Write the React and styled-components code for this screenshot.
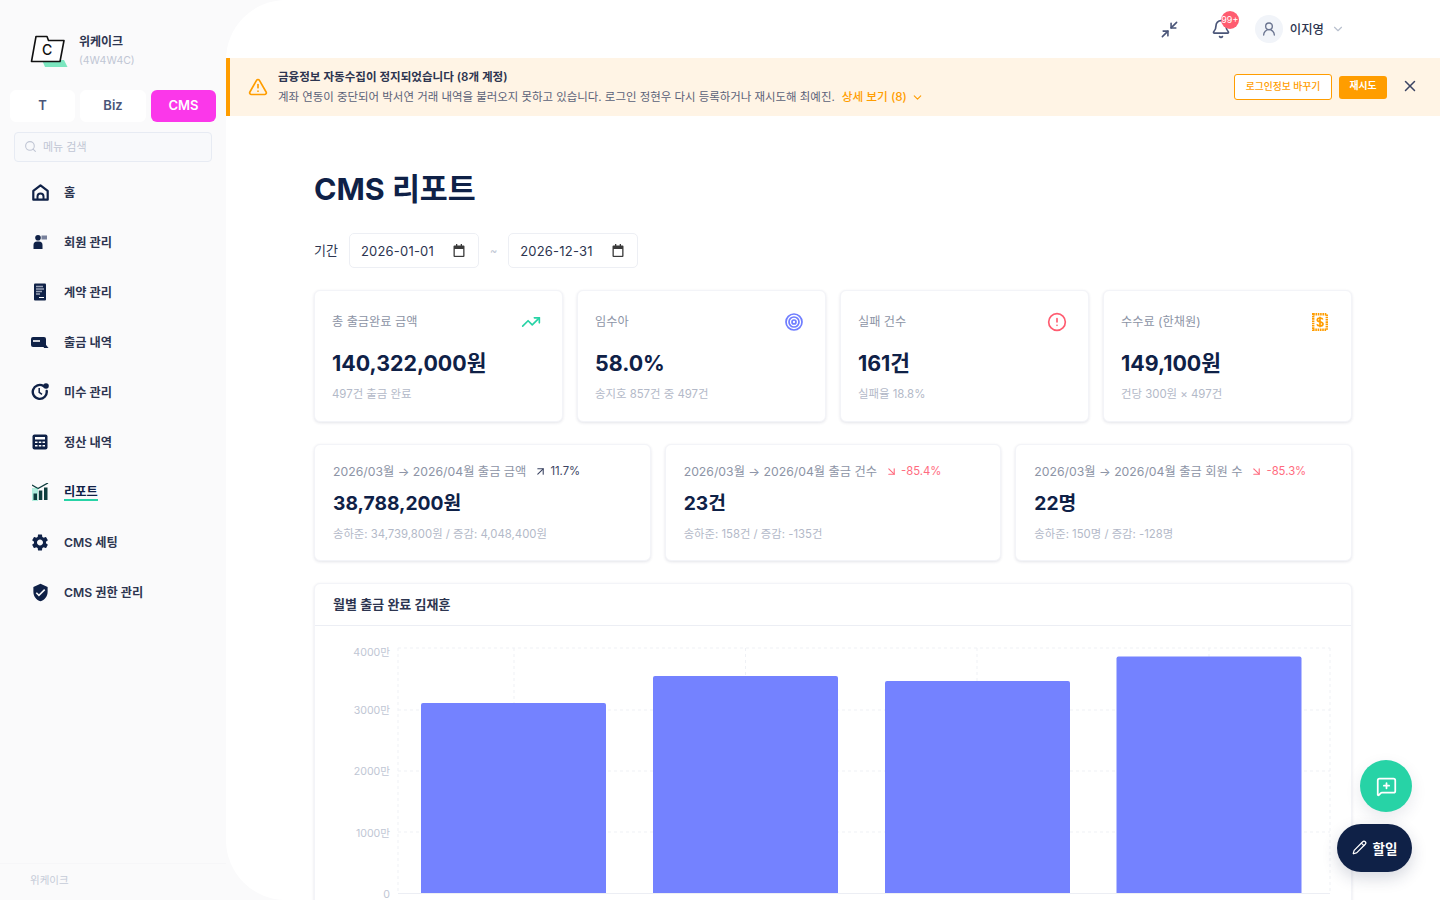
import styled, { createGlobalStyle } from "styled-components";
import {
  ArrowDownRight,
  ArrowUpRight,
  Bell,
  ChevronDown,
  CircleAlert,
  MessageSquarePlus,
  Minimize2,
  Pencil,
  Search,
  TrendingUp,
  TriangleAlert,
  UserRound,
  X,
} from "lucide-react";
import { MdSettings, MdVerifiedUser } from "react-icons/md";

const NAVY = "#0f2147";
const FONT = `Inter, "Noto Sans CJK KR", "Noto Sans", sans-serif`;

const GlobalStyle = createGlobalStyle`
  html, body, #root {
    margin: 0;
    height: 100%;
  }
  body {
    font-family: ${FONT};
    background: #fafafb;
    color: ${NAVY};
    overflow: hidden;
  }
  * {
    box-sizing: border-box;
  }
`;

const Shell = styled.div`
  display: flex;
  width: 1440px;
  height: 900px;
  overflow: hidden;
  position: relative;
`;

const Sidebar = styled.aside`
  width: 226px;
  flex: none;
  display: flex;
  flex-direction: column;
  background: #fafafb;
`;

const Brand = styled.div`
  display: flex;
  align-items: center;
  gap: 11px;
  height: 90px;
  padding: 11px 0 0 30px;
`;

const BrandText = styled.div`
  display: flex;
  flex-direction: column;
  gap: 3px;
`;

const BrandName = styled.span`
  font-size: 12px;
  line-height: 16px;
  font-weight: 600;
  color: #2d3550;
`;

const BrandCode = styled.span`
  font-size: 10.5px;
  line-height: 15px;
  color: #c0c6d4;
`;

const Tabs = styled.div`
  display: grid;
  grid-template-columns: 65px 66px 65px;
  gap: 5px;
  padding-left: 10px;
`;

const Tab = styled.button`
  height: 32px;
  padding: 0 0 2px;
  border: 0;
  border-radius: 6px;
  font-family: ${FONT};
  font-size: 13px;
  font-weight: 600;
  color: ${(p) => (p.$active ? "#fff" : "#4a5578")};
  background: ${(p) => (p.$active ? "#fb37ea" : "#fff")};
`;

const SearchBox = styled.div`
  display: flex;
  align-items: center;
  gap: 6px;
  width: 198px;
  height: 30px;
  margin: 10px 0 0 14px;
  padding: 0 0 2px 9px;
  border: 1px solid #e7ebf3;
  border-radius: 4px;
  background: #f8f9fb;
  color: #c0c6d4;
  font-size: 11px;
`;

const Nav = styled.nav`
  display: flex;
  flex-direction: column;
  margin-top: 5px;
`;

const NavItem = styled.a`
  display: flex;
  align-items: center;
  height: 50px;
  padding-left: 30px;
  font-size: 12.2px;
  font-weight: 600;
  color: #2d3550;
`;

const NavIcon = styled.span`
  display: inline-flex;
  align-items: center;
  justify-content: center;
  width: 20px;
  height: 20px;
  margin-right: 14px;
  color: ${NAVY};
`;

const NavLabel = styled.span`
  line-height: 15px;
  color: ${(p) => (p.$active ? NAVY : "inherit")};
  border-bottom: ${(p) => (p.$active ? "2px solid #27d3a6" : "0")};
`;

const SideFooter = styled.div`
  margin-top: auto;
  height: 37px;
  padding: 8px 0 0 30px;
  border-top: 1px solid #f6f6f8;
  font-size: 10.5px;
  color: #c5cbd8;
`;

const Main = styled.main`
  flex: 1;
  min-width: 0;
  height: 900px;
  display: flex;
  flex-direction: column;
  overflow: hidden;
  background: #fff;
  border-radius: 60px 0 0 60px;
`;

const TopBar = styled.header`
  height: 58px;
  flex: none;
  display: flex;
  align-items: center;
  justify-content: flex-end;
  padding-right: 95px;
  color: #4a5578;
`;

const BellWrap = styled.span`
  position: relative;
  display: inline-flex;
  margin: 0 24px 0 32px;
`;

const Badge = styled.span`
  position: absolute;
  top: -8px;
  left: 10px;
  width: 18px;
  height: 18px;
  border-radius: 50%;
  background: #ff5c70;
  color: #fff;
  font-size: 9px;
  line-height: 18px;
  text-align: center;
`;

const Avatar = styled.span`
  display: inline-flex;
  align-items: center;
  justify-content: center;
  width: 28px;
  height: 28px;
  border-radius: 50%;
  background: #f1f4f9;
  color: #69738f;
`;

const UserName = styled.span`
  margin: 0 7px;
  font-size: 12.4px;
  font-weight: 500;
  color: #2d3550;
`;

const Banner = styled.div`
  height: 58px;
  flex: none;
  display: flex;
  align-items: center;
  padding: 0 20px 0 18px;
  border-left: 4px solid #ff9d00;
  background: #fff4e5;
`;

const BannerBody = styled.div`
  flex: 1;
  margin-left: 10px;
`;

const BannerTitle = styled.div`
  font-size: 11.55px;
  line-height: 21px;
  font-weight: 600;
  color: #2d3550;
`;

const BannerText = styled.div`
  font-size: 11.45px;
  line-height: 19px;
  color: #5a6178;
`;

const BannerLink = styled.span`
  display: inline-flex;
  align-items: center;
  gap: 4px;
  margin-left: 7px;
  color: #ff9d00;
  font-size: 11.7px;
  font-weight: 500;
`;

const OutlineButton = styled.button`
  width: 98px;
  height: 26px;
  padding: 0 0 2px;
  border: 1px solid #ff9d00;
  border-radius: 3px;
  background: #fff;
  color: #ff9d00;
  font-family: ${FONT};
  font-size: 9.8px;
  font-weight: 500;
`;

const SolidButton = styled.button`
  width: 48px;
  height: 23px;
  margin-left: 7px;
  padding: 0 0 4px;
  border: 0;
  border-radius: 3px;
  background: #ff9d00;
  color: #fff;
  font-family: ${FONT};
  font-size: 9.8px;
  font-weight: 700;
`;

const CloseButton = styled.span`
  display: inline-flex;
  margin: 0 1px 2px 14px;
  color: #3b4463;
`;

const Content = styled.div`
  padding: 0 88px;
`;

const Title = styled.h1`
  margin: 53px 0 0;
  font-size: 30.4px;
  line-height: 40px;
  font-weight: 700;
  color: ${NAVY};
`;

const Period = styled.div`
  display: flex;
  align-items: center;
  height: 35px;
  margin-top: 24px;
  font-size: 13px;
  color: #2d3550;
`;

const PeriodLabel = styled.span`
  margin-bottom: 2px;
`;

const DateField = styled.div`
  display: flex;
  align-items: center;
  justify-content: space-between;
  width: 130px;
  height: 35px;
  margin-left: 11px;
  padding: 0 13px 0 11px;
  border: 1px solid #edeff4;
  border-radius: 5px;
  background: #fff;
  color: #2d3550;
  font-size: 13px;
  letter-spacing: 0.2px;
`;

const Tilde = styled.span`
  margin: 0 0 0 11px;
  color: #c0c6d4;
  font-size: 11px;
`;

const StatGrid = styled.div`
  display: grid;
  grid-template-columns: repeat(4, 1fr);
  gap: 14px;
  margin-top: 22px;
`;

const Card = styled.section`
  background: #fff;
  border: 1px solid #f3f4f8;
  border-radius: 6px;
  box-shadow: 0 1px 3px rgba(30, 40, 80, 0.12);
`;

const StatCard = styled(Card)`
  height: 132px;
  padding: 20px 18px 0 17px;
`;

const StatHead = styled.div`
  display: flex;
  align-items: center;
  justify-content: space-between;
  height: 20px;
  font-size: 12.2px;
  color: #8d94a6;
`;

const IconSlot = styled.span`
  display: inline-flex;
  margin: 2px ${(p) => p.$gap}px 0 0;
  color: ${(p) => p.$color};
`;

const StatValue = styled.div`
  margin-top: 19px;
  font-size: 21.4px;
  line-height: 26px;
  font-weight: 700;
  color: ${NAVY};
`;

const StatNote = styled.div`
  margin-top: 10px;
  font-size: 11.4px;
  line-height: 16px;
  color: #b3b9c8;
`;

const CompareGrid = styled.div`
  display: grid;
  grid-template-columns: repeat(3, 1fr);
  gap: 14px;
  margin-top: 22px;
`;

const CompareCard = styled(Card)`
  height: 117px;
  padding: 17px 18px 0;
`;

const CompareHead = styled.div`
  display: flex;
  align-items: center;
  height: 18px;
  font-size: 12.25px;
  color: #8d94a6;
  white-space: nowrap;
`;

const Delta = styled.span`
  display: inline-flex;
  align-items: center;
  gap: 3px;
  margin-left: 8px;
  font-size: 11.3px;
  color: ${(p) => (p.$down ? "#ff6b7e" : "#3b4463")};
`;

const CompareValue = styled.div`
  margin-top: 10px;
  font-size: 19.25px;
  line-height: 26px;
  font-weight: 700;
  color: ${NAVY};
`;

const CompareNote = styled.div`
  margin-top: 10px;
  font-size: 11.35px;
  line-height: 16px;
  color: #b3b9c8;
`;

const ChartCard = styled(Card)`
  margin-top: 22px;
  height: 400px;
`;

const ChartHead = styled.div`
  height: 42px;
  padding: 0 18px 2px;
  display: flex;
  align-items: center;
  border-bottom: 1px solid #eceef4;
  font-size: 13px;
  font-weight: 600;
  color: #2d3550;
`;

const ChartSvg = styled.svg`
  display: block;
`;

const AxisLabel = styled.text`
  font-family: ${FONT};
  font-size: 10.6px;
  fill: #c0c6d4;
  text-anchor: end;
`;

const Fab = styled.button`
  position: absolute;
  right: 28px;
  bottom: 88px;
  width: 52px;
  height: 52px;
  display: flex;
  align-items: center;
  justify-content: center;
  padding: 0;
  border: 0;
  border-radius: 50%;
  background: #27d3a6;
  color: #fff;
  box-shadow: 0 6px 16px rgba(30, 40, 80, 0.1);
`;

const TodoButton = styled.button`
  position: absolute;
  right: 28px;
  bottom: 28px;
  width: 75px;
  height: 48px;
  display: flex;
  align-items: center;
  justify-content: center;
  gap: 6px;
  padding: 0 0 1px;
  border: 0;
  border-radius: 24px;
  background: ${NAVY};
  color: #fff;
  font-family: ${FONT};
  font-size: 13.5px;
  font-weight: 700;
  box-shadow: 0 6px 16px rgba(30, 40, 80, 0.18);
`;

const LogoMark = () => (
  <svg width="38" height="34" viewBox="0 0 38 34" aria-hidden="true">
    <path d="M12 26h22l3.5 7H15z" fill="#7be6bf" />
    <path
      d="M6 2.5h11l1.5 4h15.5L30 27.5H1.5z"
      fill="#fff"
      stroke="#111"
      strokeWidth="1.6"
      strokeLinejoin="round"
    />
    <text x="12" y="21" fontFamily="Inter, sans-serif" fontSize="14" fontWeight="500" fill="#111">
      C
    </text>
  </svg>
);

const CalendarGlyph = () => (
  <svg width="12" height="13" viewBox="0 0 12 13" aria-hidden="true">
    <path
      d="M1.500 1.500h9a1 1 0 0 1 1 1v9.500a1 1 0 0 1-1 1h-9a1 1 0 0 1-1-1V2.500a1 1 0 0 1 1-1z"
      fill="#3a3a3a"
    />
    <path d="M1.800 5h8.400v6.800H1.800z" fill="#fff" />
    <path d="M3 0h1.300v2H3zM7.700 0H9v2H7.700z" fill="#3a3a3a" />
  </svg>
);

const HomeIcon = () => (
  <svg width="17" height="17" viewBox="0 0 17 17" fill="none" stroke="currentColor" aria-hidden="true">
    <path d="M1.300 15.700V6.800L8.500 1.300l7.200 5.500v8.900h-14.400z" strokeWidth="2.200" strokeLinejoin="round" />
    <path d="M5.500 15.500v-3a3 3 0 0 1 6 0v3" strokeWidth="2" />
  </svg>
);

const MemberIcon = () => (
  <svg width="16" height="16" viewBox="0 0 16 16" fill="currentColor" aria-hidden="true">
    <circle cx="6" cy="3.800" r="2.800" />
    <path d="M1.500 15V11a3.500 3.500 0 0 1 3.500-3.500h2A3.500 3.500 0 0 1 10.500 11v4z" />
    <path d="M9.500 1.500h5.500v4H9.500z" fill="#77809b" />
  </svg>
);

const ContractIcon = () => (
  <svg width="14" height="18" viewBox="0 0 14 18" aria-hidden="true">
    <rect width="12" height="17" x="1" y="0.500" rx="1" fill="currentColor" />
    <path d="M3 3.500h7M3 6h8M3 8.500h6M3 11h4" stroke="#9aa3b8" strokeWidth="1.300" />
    <path d="M6 14.500h5" stroke="#fff" strokeWidth="1" />
  </svg>
);

const PayoutIcon = () => (
  <svg width="18" height="13" viewBox="0 0 18 13" aria-hidden="true">
    <rect width="15" height="10" y="1" rx="2" fill="currentColor" />
    <path d="M2 5h7" stroke="#fff" strokeWidth="1.600" />
    <path d="M11 7h2.500l4 5h-4.500z" fill="currentColor" />
  </svg>
);

const UnpaidIcon = () => (
  <svg width="18" height="18" viewBox="0 0 18 18" fill="none" aria-hidden="true">
    <path
      d="M12.500 3a7 7 0 1 0 3.200 5"
      stroke="currentColor"
      strokeWidth="2.400"
      strokeLinecap="round"
    />
    <path d="M8.200 5v4.300l2.800 2" stroke="currentColor" strokeWidth="1.500" />
    <circle cx="15" cy="3" r="2.800" fill="currentColor" />
  </svg>
);

const CalculatorIcon = () => (
  <svg width="16" height="16" viewBox="0 0 16 16" aria-hidden="true">
    <rect width="15" height="15" x="0.500" y="0.500" rx="2" fill="currentColor" />
    <path d="M3 3h10v2.500H3z" fill="#fff" />
    <path d="M3 7.500h2.500V9H3zM6.800 7.500h2.500V9H6.800zM10.500 7.500H13V9h-2.500zM3 11h2.500v1.500H3zM6.800 11h2.500v1.500H6.800zM10.500 11H13v1.500h-2.500z" fill="#fff" />
  </svg>
);

const ReportIcon = () => (
  <svg width="17" height="18" viewBox="0 0 17 18" aria-hidden="true">
    <path d="M0 2l6 3.500L16 0" fill="none" stroke="#0f3d3e" strokeWidth="1.400" />
    <path d="M0 5h6v13H0z" fill="#27d3a6" opacity="0.35" />
    <path d="M1.500 10.500h3.500V17H1.500zM6.800 7.500h3.500V17H6.800zM12 4.500h3.500V17H12z" fill="#0f3d3e" />
  </svg>
);

const TargetIcon = () => (
  <svg width="18" height="18" viewBox="0 0 18 18" fill="none" stroke="currentColor" aria-hidden="true">
    <circle cx="9" cy="9" r="8" strokeWidth="1.700" />
    <circle cx="9" cy="9" r="5" strokeWidth="1.700" />
    <circle cx="9" cy="9" r="2" strokeWidth="1.700" />
  </svg>
);

const StampIcon = () => (
  <svg width="16" height="18" viewBox="0 0 16 18" fill="none" stroke="currentColor" aria-hidden="true">
    <rect x="1.200" y="1.200" width="13.600" height="15.600" strokeWidth="2.400" strokeDasharray="1.600 0.700" />
    <path
      d="M10.800 6.500C10.500 5.500 9.500 5 8 5 6.300 5 5.300 5.800 5.300 7 5.300 9.500 11 8.300 11 11 11 12.300 9.800 13 8 13 6.300 13 5.300 12.300 5 11.300M8 3.800v10.400"
      strokeWidth="1.700"
    />
  </svg>
);

const navItems = [
  { label: "홈", icon: <HomeIcon /> },
  { label: "회원 관리", icon: <MemberIcon /> },
  { label: "계약 관리", icon: <ContractIcon /> },
  { label: "출금 내역", icon: <PayoutIcon /> },
  { label: "미수 관리", icon: <UnpaidIcon /> },
  { label: "정산 내역", icon: <CalculatorIcon /> },
  { label: "리포트", icon: <ReportIcon />, active: true },
  { label: "CMS 세팅", icon: <MdSettings size={21} /> },
  { label: "CMS 권한 관리", icon: <MdVerifiedUser size={19} /> },
];

const stats = [
  {
    label: "총 출금완료 금액",
    value: "140,322,000원",
    note: "497건 출금 완료",
    color: "#27d3a6",
    gap: 3,
    icon: <TrendingUp size={20} />,
  },
  {
    label: "임수아",
    value: "58.0%",
    note: "송지호 857건 중 497건",
    color: "#6f7dff",
    gap: 4,
    icon: <TargetIcon />,
  },
  {
    label: "실패 건수",
    value: "161건",
    note: "실패율 18.8%",
    color: "#ff5c70",
    gap: 3,
    icon: <CircleAlert size={20} />,
  },
  {
    label: "수수료 (한채원)",
    value: "149,100원",
    note: "건당 300원 × 497건",
    color: "#ff9d00",
    gap: 5,
    icon: <StampIcon />,
  },
];

const compares = [
  {
    label: "2026/03월 → 2026/04월 출금 금액",
    delta: "11.7%",
    value: "38,788,200원",
    note: "송하준: 34,739,800원 / 증감: 4,048,400원",
  },
  {
    label: "2026/03월 → 2026/04월 출금 건수",
    delta: "-85.4%",
    down: true,
    value: "23건",
    note: "송하준: 158건 / 증감: -135건",
  },
  {
    label: "2026/03월 → 2026/04월 출금 회원 수",
    delta: "-85.3%",
    down: true,
    value: "22명",
    note: "송하준: 150명 / 증감: -128명",
  },
];

const ticks = [
  { label: "4000만", y: 22, textY: 30 },
  { label: "3000만", y: 84, textY: 88 },
  { label: "2000만", y: 145, textY: 149 },
  { label: "1000만", y: 206, textY: 211 },
  { label: "0", y: 267, textY: 272 },
];

const bars = [
  { x: 106, top: 77 },
  { x: 338, top: 50 },
  { x: 570, top: 55 },
  { x: 801.500, top: 30.500 },
];

const MonthlyChart = () => (
  <ChartSvg width="1036" height="356" viewBox="0 0 1036 356" aria-hidden="true">
    {ticks.slice(0, 4).map((t) => (
      <line key={t.label} x1="83" x2="1015" y1={t.y} y2={t.y} stroke="#eff1f5" strokeDasharray="3 3" />
    ))}
    {[83, 199, 430.500, 662, 894, 1015].map((x) => (
      <line key={x} x1={x} x2={x} y1="22" y2="267" stroke="#eff1f5" strokeDasharray="3 3" />
    ))}
    {bars.map((b) => (
      <path
        key={b.x}
        d={`M${b.x} 267V${b.top + 2}a2 2 0 0 1 2-2h181a2 2 0 0 1 2 2V267z`}
        fill="#7482ff"
      />
    ))}
    <line x1="83" x2="1015" y1="267.500" y2="267.500" stroke="#eceef4" />
    {ticks.map((t) => (
      <AxisLabel key={t.label} x="75" y={t.textY}>
        {t.label}
      </AxisLabel>
    ))}
  </ChartSvg>
);

export default function App() {
  return (
    <>
      <GlobalStyle />
      <Shell>
        <Sidebar>
          <Brand>
            <LogoMark />
            <BrandText>
              <BrandName>위케이크</BrandName>
              <BrandCode>(4W4W4C)</BrandCode>
            </BrandText>
          </Brand>
          <Tabs>
            <Tab>T</Tab>
            <Tab>Biz</Tab>
            <Tab $active>CMS</Tab>
          </Tabs>
          <SearchBox>
            <Search size={13} />
            메뉴 검색
          </SearchBox>
          <Nav>
            {navItems.map((item) => (
              <NavItem key={item.label}>
                <NavIcon>{item.icon}</NavIcon>
                <NavLabel $active={item.active}>{item.label}</NavLabel>
              </NavItem>
            ))}
          </Nav>
          <SideFooter>위케이크</SideFooter>
        </Sidebar>

        <Main>
          <TopBar>
            <Minimize2 size={19} />
            <BellWrap>
              <Bell size={20} />
              <Badge>99+</Badge>
            </BellWrap>
            <Avatar>
              <UserRound size={16} />
            </Avatar>
            <UserName>이지영</UserName>
            <ChevronDown size={14} color="#b9c0ce" />
          </TopBar>

          <Banner>
            <TriangleAlert size={20} color="#ff9d00" />
            <BannerBody>
              <BannerTitle>금융정보 자동수집이 정지되었습니다 (8개 계정)</BannerTitle>
              <BannerText>
                계좌 연동이 중단되어 박서연 거래 내역을 불러오지 못하고 있습니다. 로그인 정현우 다시 등록하거나 재시도해 최예진.
                <BannerLink>
                  상세 보기 (8)
                  <ChevronDown size={13} />
                </BannerLink>
              </BannerText>
            </BannerBody>
            <OutlineButton>로그인정보 바꾸기</OutlineButton>
            <SolidButton>재시도</SolidButton>
            <CloseButton>
              <X size={18} />
            </CloseButton>
          </Banner>

          <Content>
            <Title>CMS 리포트</Title>
            <Period>
              <PeriodLabel>기간</PeriodLabel>
              <DateField>
                2026-01-01
                <CalendarGlyph />
              </DateField>
              <Tilde>~</Tilde>
              <DateField>
                2026-12-31
                <CalendarGlyph />
              </DateField>
            </Period>

            <StatGrid>
              {stats.map((s) => (
                <StatCard key={s.label}>
                  <StatHead>
                    {s.label}
                    <IconSlot $color={s.color} $gap={s.gap}>
                      {s.icon}
                    </IconSlot>
                  </StatHead>
                  <StatValue>{s.value}</StatValue>
                  <StatNote>{s.note}</StatNote>
                </StatCard>
              ))}
            </StatGrid>

            <CompareGrid>
              {compares.map((c) => (
                <CompareCard key={c.label}>
                  <CompareHead>
                    {c.label}
                    <Delta $down={c.down}>
                      {c.down ? <ArrowDownRight size={13} /> : <ArrowUpRight size={13} />}
                      {c.delta}
                    </Delta>
                  </CompareHead>
                  <CompareValue>{c.value}</CompareValue>
                  <CompareNote>{c.note}</CompareNote>
                </CompareCard>
              ))}
            </CompareGrid>

            <ChartCard>
              <ChartHead>월별 출금 완료 김재훈</ChartHead>
              <MonthlyChart />
            </ChartCard>
          </Content>
        </Main>

        <Fab aria-label="문의">
          <MessageSquarePlus size={21} />
        </Fab>
        <TodoButton>
          <Pencil size={15} />
          할일
        </TodoButton>
      </Shell>
    </>
  );
}
